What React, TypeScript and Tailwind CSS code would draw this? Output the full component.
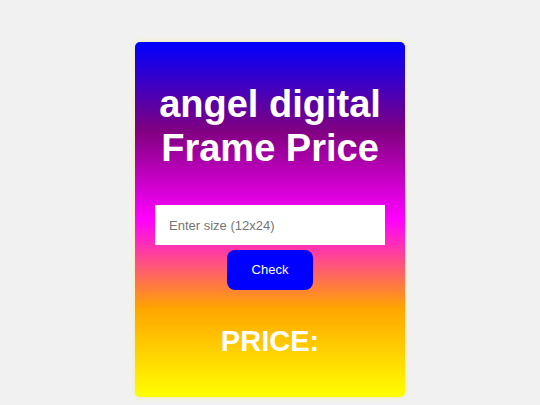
export default function App() {
  return (
    <div
      className="min-h-[405px] w-full bg-[#f1f1f1] flex justify-center pt-[42px]"
      style={{ fontFamily: '"Liberation Sans", Arial, sans-serif' }}
    >
      <div className="w-[270px] h-[355px] rounded-[5px] bg-[linear-gradient(#0000ff,#800080,#ff00ff,#ffa500,#ffff00)] shadow-[0_0_5px_#f2ec9a] flex flex-col items-center px-5 pt-[40px]">
        <h1 className="text-white font-bold text-[38px] leading-[44px] text-center">
          angel digital Frame Price
        </h1>
        <input
          type="text"
          placeholder="Enter size (12x24)"
          className="mt-[35px] w-[230px] h-[40px] bg-white px-[14px] text-[13px] text-black placeholder:text-[#757575] outline-none"
        />
        <button
          type="button"
          className="mt-[5px] w-[86px] h-[40px] rounded-[8px] bg-[#0000ff] text-white text-[13px]"
        >
          Check
        </button>
        <div className="mt-[30px] text-white font-bold text-[29px]">PRICE:</div>
      </div>
    </div>
  );
}
